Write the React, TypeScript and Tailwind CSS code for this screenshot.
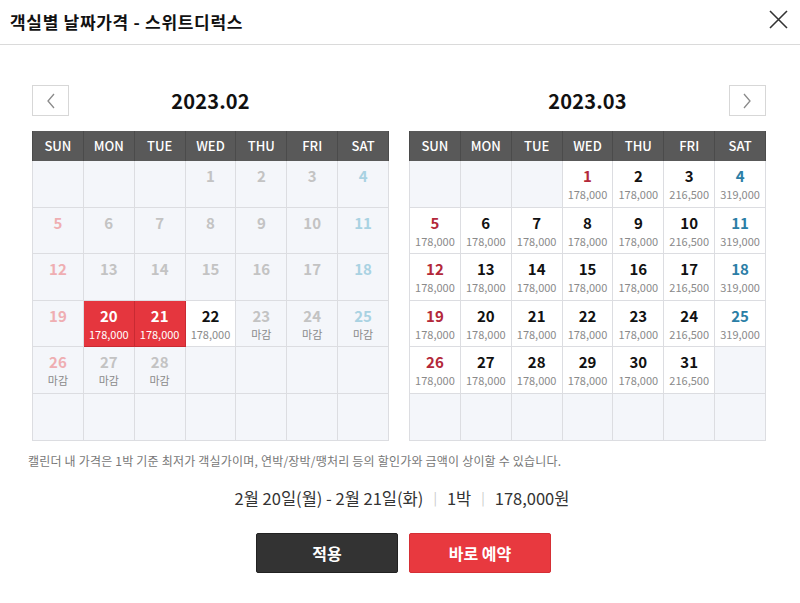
import React from "react";

type Cell = {
  day?: number;
  sub?: string;
  kind: "empty" | "past" | "closed" | "open" | "selected";
  dow: number;
  holiday?: boolean;
};

const FONT = { fontFamily: '"Noto Sans CJK KR", "Noto Sans", sans-serif' };
const DAYS = ["SUN", "MON", "TUE", "WED", "THU", "FRI", "SAT"];

function buildFeb(): Cell[] {
  const cells: Cell[] = [];
  for (let i = 0; i < 3; i++) cells.push({ kind: "empty", dow: i });
  for (let d = 1; d <= 28; d++) {
    const dow = (d + 2) % 7;
    if (d < 20) cells.push({ day: d, kind: "past", dow });
    else if (d === 20 || d === 21) cells.push({ day: d, kind: "selected", sub: "178,000", dow });
    else if (d === 22) cells.push({ day: d, kind: "open", sub: "178,000", dow });
    else cells.push({ day: d, kind: "closed", sub: "마감", dow });
  }
  while (cells.length < 42) cells.push({ kind: "empty", dow: cells.length % 7 });
  return cells;
}

function buildMar(): Cell[] {
  const cells: Cell[] = [];
  for (let i = 0; i < 3; i++) cells.push({ kind: "empty", dow: i });
  for (let d = 1; d <= 31; d++) {
    const dow = (d + 2) % 7;
    const price = dow === 6 ? "319,000" : dow === 5 ? "216,500" : "178,000";
    cells.push({ day: d, kind: "open", sub: price, dow, holiday: d === 1 });
  }
  while (cells.length < 42) cells.push({ kind: "empty", dow: cells.length % 7 });
  return cells;
}

function dayColor(c: Cell) {
  if (c.kind === "selected") return "text-white";
  const faded = c.kind === "past" || c.kind === "closed";
  if (c.dow === 0 || c.holiday) return faded ? "text-[#efaeb2]" : "text-[#b3283a]";
  if (c.dow === 6) return faded ? "text-[#a9d2e2]" : "text-[#2b7ea6]";
  return faded ? "text-[#c3c3c3]" : "text-[#111]";
}

function DayCell({ c }: { c: Cell }) {
  const bg =
    c.kind === "selected"
      ? "bg-[#e5363e] border-[#c92a32]"
      : c.kind === "open"
      ? "bg-white border-[#dcdde1]"
      : "bg-[#f4f6fa] border-[#dcdde1]";
  return (
    <div className={`h-[46.6px] border-r border-b ${bg} flex flex-col items-center pt-[5px]`}>
      {c.day !== undefined && (
        <>
          <span className={`text-[15px] font-bold leading-[20px] ${dayColor(c)}`}>{c.day}</span>
          {c.sub && (
            <span
              className={`text-[11px] leading-[14px] mt-[1px] ${
                c.kind === "selected" ? "text-white" : "text-[#8a8a8a]"
              }`}
            >
              {c.sub}
            </span>
          )}
        </>
      )}
    </div>
  );
}

function Chevron({ dir }: { dir: "left" | "right" }) {
  return (
    <svg width="10" height="16" viewBox="0 0 10 16" fill="none">
      <path
        d={dir === "left" ? "M8 1 L2 8 L8 15" : "M2 1 L8 8 L2 15"}
        stroke="#8a8a8a"
        strokeWidth="1.3"
      />
    </svg>
  );
}

function Calendar({ title, cells, nav }: { title: string; cells: Cell[]; nav: "left" | "right" }) {
  const btn = (
    <button className="w-[37px] h-[31px] border border-[#d7d7d7] bg-white flex items-center justify-center">
      <Chevron dir={nav} />
    </button>
  );
  const spacer = <div className="w-[37px] h-[31px]" />;
  return (
    <div className="w-[357px] flex flex-col">
      <div className="flex items-center justify-between h-[31px]">
        {nav === "left" ? btn : spacer}
        <span className="text-[20px] font-bold text-[#111] tracking-[0.2px]">{title}</span>
        {nav === "right" ? btn : spacer}
      </div>
      <div className="mt-[15px] grid grid-cols-7 bg-[#595959] h-[30px] border-l border-[#4b4b4b]">
        {DAYS.map((d) => (
          <div
            key={d}
            className="border-r border-[#4b4b4b] flex items-center justify-center text-white text-[13px] font-medium"
          >
            {d}
          </div>
        ))}
      </div>
      <div className="grid grid-cols-7 border-l border-[#dcdde1]">
        {cells.map((c, i) => (
          <DayCell key={i} c={c} />
        ))}
      </div>
    </div>
  );
}

export default function App() {
  return (
    <div className="w-[800px] h-[603px] bg-white text-[#222]" style={FONT}>
      <div className="h-[45px] border-b border-[#dadada] flex items-center justify-between pl-[10px] pr-[12px]">
        <span className="text-[17px] font-bold text-[#111] tracking-[0.7px]">객실별 날짜가격 - 스위트디럭스</span>
        <svg width="19" height="19" viewBox="0 0 19 19" fill="none" className="mb-[6px]">
          <path d="M1 1 L18 18 M18 1 L1 18" stroke="#333" strokeWidth="1.6" />
        </svg>
      </div>
      <div className="pt-[40px] pl-[32px] flex gap-[20px]">
        <Calendar title="2023.02" cells={buildFeb()} nav="left" />
        <Calendar title="2023.03" cells={buildMar()} nav="right" />
      </div>
      <p className="mt-[11px] pl-[28px] text-[12px] text-[#777] tracking-[0.2px]">
        캘린더 내 가격은 1박 기준 최저가 객실가이며, 연박/장박/땡처리 등의 할인가와 금액이 상이할 수 있습니다.
      </p>
      <div className="mt-[16px] pl-[4px] flex justify-center items-center text-[16.5px] text-[#333]">
        <span>2월 20일(월) - 2월 21일(화)</span>
        <span className="mx-[10px] text-[#c8c8c8] text-[13px]">|</span>
        <span>1박</span>
        <span className="mx-[10px] text-[#c8c8c8] text-[13px]">|</span>
        <span>178,000원</span>
      </div>
      <div className="mt-[23px] pl-[7px] flex justify-center gap-[11px]">
        <button className="w-[142px] h-[40px] bg-[#333] border border-[#222] rounded-[2px] text-white text-[16px] font-bold">
          적용
        </button>
        <button className="w-[142px] h-[40px] bg-[#e8393f] border border-[#d52f35] rounded-[2px] text-white text-[16px] font-bold">
          바로 예약
        </button>
      </div>
    </div>
  );
}
